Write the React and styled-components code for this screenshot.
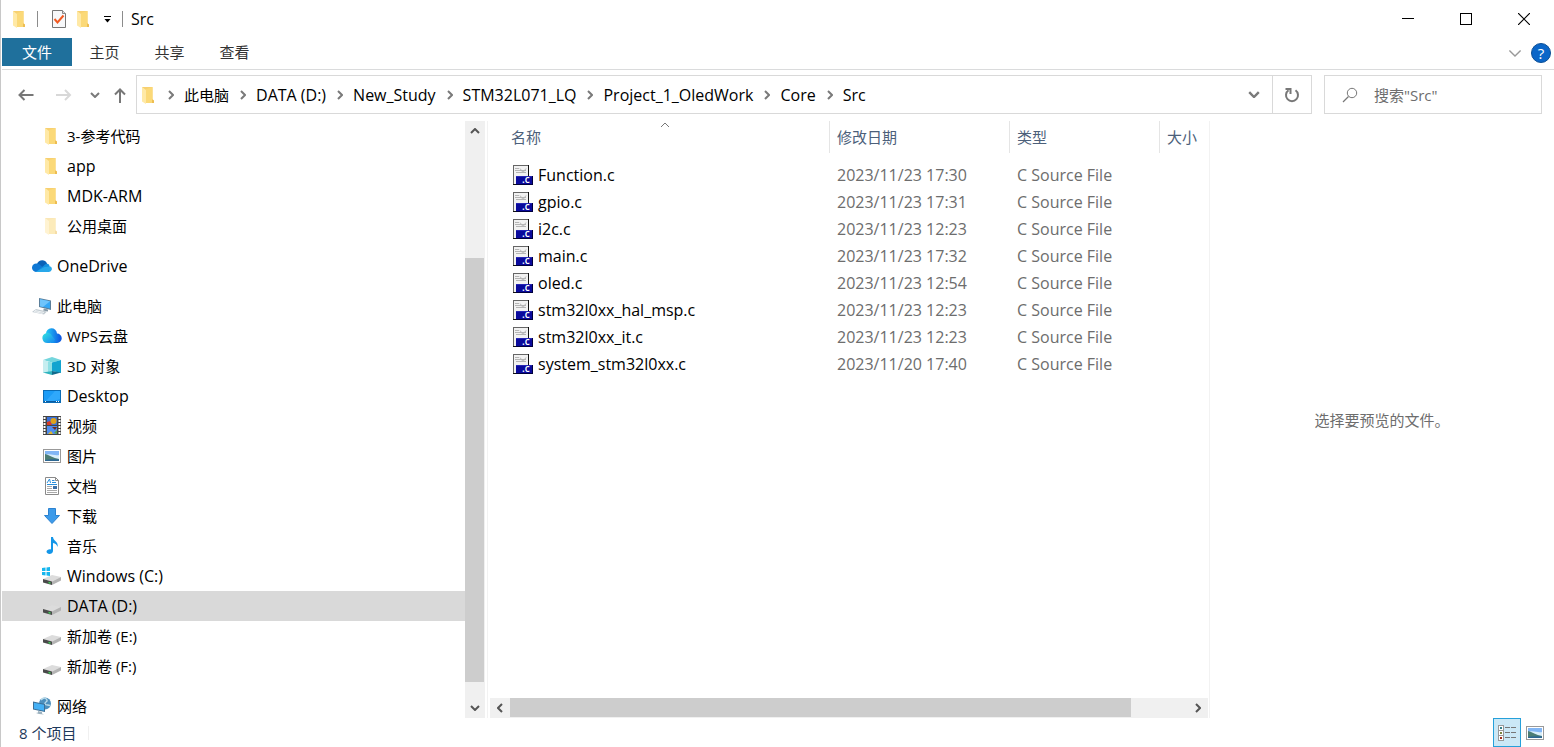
import React, { useState } from "react";
import styled, { createGlobalStyle } from "styled-components";

const GlobalStyle = createGlobalStyle`
  * {
    box-sizing: border-box;
  }

  body {
    margin: 0;
    background: #fff;
    color: #000;
    font-family: "Open Sans", "Noto Sans CJK SC", sans-serif;
    font-size: 15px;
    line-height: 20px;
  }

  button, input {
    font: inherit;
    color: inherit;
  }

  svg {
    display: block;
    flex: none;
  }
`;

const Window = styled.div`
  display: flex;
  flex-direction: column;
  height: 100vh;
  padding-left: 1px;
  border-left: 1px solid #c8c8c8;
  background: #fff;
  overflow: hidden;
`;

const PlainButton = styled.button`
  display: flex;
  align-items: center;
  justify-content: center;
  padding: 0;
  border: 0;
  background: none;
`;

const Latin = styled.span`
  font-size: 16px;
`;

/* title bar */

const TitleBar = styled.header`
  display: flex;
  align-items: center;
  height: 38px;
  padding: 0 1px 0 8px;
`;

const QuickAccess = styled.div`
  display: flex;
  align-items: center;
  gap: 7px;
`;

const Separator = styled.span`
  width: 1px;
  height: 16px;
  margin-right: 6px;
  background: #8c8c8c;
`;

const CustomizeButton = styled(PlainButton)`
  width: 14px;
  height: 20px;
`;

const Title = styled.h1`
  flex: 1;
  margin: 0 0 0 2px;
  font-size: 16px;
  font-weight: 400;
`;

const CaptionButton = styled(PlainButton)`
  width: 58px;
  height: 38px;
`;

/* ribbon */

const Ribbon = styled.nav`
  display: flex;
  align-items: flex-start;
  height: 32px;
  border-bottom: 1px solid #dadbdc;
`;

const RibbonTab = styled(PlainButton)`
  width: ${(p) => (p.$primary ? 70 : 65)}px;
  height: 28px;
  background: ${(p) => (p.$primary ? "#1f709c" : "none")};
  color: ${(p) => (p.$primary ? "#fff" : "#333")};
`;

const RibbonTools = styled.div`
  display: flex;
  align-items: center;
  gap: 9px;
  height: 30px;
  margin-left: auto;
  padding-right: 3px;
`;

/* navigation row */

const NavRow = styled.div`
  display: flex;
  align-items: center;
  height: 51px;
  padding: 0 12px 2px 0;
`;

const NavButtons = styled.div`
  display: flex;
  align-items: center;
  width: 134px;
  padding-left: 8px;
`;

const NavButton = styled(PlainButton)`
  width: ${(p) => p.$width}px;
  height: 38px;
`;

const AddressBar = styled.div`
  display: flex;
  align-items: center;
  flex: 1;
  height: 39px;
  padding-left: 2px;
  border: 1px solid #d9d9d9;
`;

const Crumbs = styled.ol`
  display: flex;
  flex: 1;
  margin: 0;
  padding: 0;
  list-style: none;
`;

const Crumb = styled.li`
  display: flex;
  align-items: center;
  gap: 10px;
  padding-left: 11px;
  white-space: nowrap;

  &:first-child {
    padding-left: 9px;
  }

  a {
    color: #000;
    text-decoration: none;
  }
`;

const AddressButton = styled(PlainButton)`
  width: ${(p) => (p.$divided ? 39 : 36)}px;
  height: 37px;
  border-left: ${(p) => (p.$divided ? "1px solid #d9d9d9" : "0")};
`;

const SearchBox = styled.label`
  display: flex;
  align-items: center;
  gap: 16px;
  width: 218px;
  height: 39px;
  margin-left: 12px;
  padding-left: 17px;
  border: 1px solid #d9d9d9;

  input {
    flex: 1;
    min-width: 0;
    padding: 0;
    border: 0;
    outline: 0;
    background: none;
  }

  input::placeholder {
    color: #6d6d6d;
    opacity: 1;
  }
`;

/* body */

const Body = styled.div`
  display: flex;
  flex: 1;
  min-height: 0;
`;

const Sidebar = styled.aside`
  display: flex;
  width: 483px;
`;

const Tree = styled.div`
  flex: 1;
  min-width: 0;
  overflow: hidden;
`;

const TreeGroup = styled.ul`
  margin: 0 0 10px;
  padding: 0;
  list-style: none;
`;

const TreeItem = styled.a`
  display: flex;
  align-items: center;
  gap: 5px;
  height: 30px;
  padding-left: ${(p) => (p.$level ? 40 : 30)}px;
  background: ${(p) => (p.$selected ? "#d9d9d9" : "transparent")};
  color: #000;
  text-decoration: none;
  white-space: nowrap;
`;

const ScrollBar = styled.div`
  display: flex;
  flex-direction: ${(p) => (p.$vertical ? "column" : "row")};
  ${(p) => (p.$vertical ? "width" : "height")}: 20px;
  padding: ${(p) => (p.$vertical ? "0 1px 0 0" : "0 0 1px")};
  background: #f0f0f0;
`;

const ScrollButton = styled(PlainButton)`
  width: 20px;
  height: 20px;
`;

const ScrollSpace = styled.div`
  flex: ${(p) => p.$grow} 1 0;
  background: ${(p) => (p.$thumb ? "#cdcdcd" : "none")};
`;

const FilePane = styled.main`
  display: flex;
  flex-direction: column;
  flex: 1;
  min-width: 0;
  margin-left: 2px;
  padding: 0 1px 0 2px;
  border-left: 1px solid #f2f2f2;
  border-right: 1px solid #f2f2f2;
`;

const FileArea = styled.div`
  flex: 1;
  min-height: 0;
  overflow: hidden;
`;

const FileTable = styled.table`
  width: 100%;
  border-collapse: separate;
  border-spacing: 0;
  table-layout: fixed;

  th {
    position: relative;
    height: 32px;
    padding: 0 0 0 7px;
    border-right: 1px solid #e5e5e5;
    color: #4c607a;
    font-weight: 400;
    text-align: left;
  }

  th:last-child {
    border-right: 0;
  }

  th:first-child {
    padding-left: 21px;
  }

  td {
    height: 27px;
    padding: 0 0 0 7px;
    color: #6d6d6d;
    font-size: 16px;
    white-space: nowrap;
  }

  td:first-child {
    padding-left: 23px;
    color: #000;
  }

  tbody::before {
    content: "";
    display: block;
    height: 8px;
  }
`;

const SortMark = styled.span`
  position: absolute;
  top: 1px;
  left: 50%;
`;

const FileName = styled.div`
  display: flex;
  align-items: center;
  gap: 5px;
`;

const Preview = styled.section`
  display: flex;
  align-items: center;
  justify-content: center;
  width: 344px;
  color: #6d6d6d;
`;

const StatusBar = styled.footer`
  display: flex;
  align-items: center;
  height: 29px;
  padding-right: 10px;
  color: #1e395b;
`;

const StatusText = styled.span`
  padding: 0 12px 0 17px;
  border-right: 1px solid #f0f0f0;
  line-height: 14px;
`;

const ViewButtons = styled.div`
  display: flex;
  gap: 5px;
  margin-left: auto;
`;

const ViewButton = styled(PlainButton)`
  width: ${(p) => (p.$active ? 28 : 18)}px;
  height: 29px;
  border: ${(p) => (p.$active ? "1px solid #26a0da" : "0")};
  background: ${(p) => (p.$active ? "#cbe8f6" : "none")};
`;

/* icons */

const FolderIcon = ({ faded }) => (
  <svg width="20" height="20" viewBox="0 0 20 20" opacity={faded ? 0.5 : 1}>
    <path d="M3 2h10.500v12l1.500 2v2H7z" fill="#f7d070" />
    <path d="M7 4l6.500-2v12l1.500 2v2H7z" fill="#fbd978" />
    <path d="M13 14.500l2 1V18h-2z" fill="#edbd52" />
    <path d="M3 2l4 3v14l-4-2.500z" fill="#ffe9a6" />
  </svg>
);

const CheckPageIcon = () => (
  <svg width="16" height="20" viewBox="0 0 16 20">
    <path d="M1.500 1.500h10l3 3v14h-13z" fill="#f7f8fa" stroke="#777" />
    <path d="M11.500 1.500v3h3" fill="#ddd" stroke="#888" />
    <path d="M3.500 10l3 3.500 6-7" fill="none" stroke="#f15a22" strokeWidth="2" />
  </svg>
);

const paths = {
  right: "M1 1l4 4-4 4",
  left: "M5 1L1 5l4 4",
  down: "M1 1l4 4 4-4",
  up: "M1 5l4-4 4 4",
};

const Chevron = ({ to, size = 10, color = "#7a7a7a", weight = 2 }) => {
  const flat = to === "up" || to === "down";
  return (
    <svg
      width={flat ? size : size * 0.6}
      height={flat ? size * 0.6 : size}
      viewBox={flat ? "0 0 10 6" : "0 0 6 10"}
    >
      <path d={paths[to]} fill="none" stroke={color} strokeWidth={weight} />
    </svg>
  );
};

const ArrowIcon = ({ to, color = "#777" }) => (
  <svg width="16" height="16" viewBox="0 0 16 16">
    <path
      d={
        {
          left: "M15.500 8H2M6.500 3l-5 5 5 5",
          right: "M0 8h14M9 3l5 5-5 5",
          up: "M8 16V2.500M3 7.500l5-5 5 5",
        }[to]
      }
      fill="none"
      stroke={color}
      strokeWidth="2"
    />
  </svg>
);

const RefreshIcon = () => (
  <svg width="16" height="16" viewBox="0 0 16 16">
    <path d="M4.500 3.300A6 6 0 1 0 11.500 3.300" fill="none" stroke="#777" strokeWidth="2" />
    <path d="M1.500 2h5v5" fill="none" stroke="#777" strokeWidth="2" />
  </svg>
);

const SearchIcon = () => (
  <svg width="16" height="16" viewBox="0 0 16 16">
    <circle cx="10" cy="6" r="4.700" fill="none" stroke="#777" />
    <path d="M6.500 9.500L1 15" stroke="#777" strokeWidth="1.200" />
  </svg>
);

const HelpIcon = () => (
  <svg width="20" height="20" viewBox="0 0 20 20">
    <circle cx="10" cy="10" r="9.500" fill="#0b66c8" stroke="#0c4f96" />
    <text x="10" y="15.500" fill="#fff" fontSize="15" textAnchor="middle">?</text>
  </svg>
);

const OneDriveIcon = () => (
  <svg width="20" height="20" viewBox="0 0 20 20">
    <path d="M5 8c1-4 8-5.500 10-.500l1 4-9 3z" fill="#0a62b8" />
    <path d="M4 16a4.200 4.200 0 0 1 .500-8.500c3 0 5 3 8 5L7 16z" fill="#0f78d4" />
    <path d="M4 16L12 9.500c1-1.500 3-2.500 5-1l1 3-6 4.500z" fill="#1490df" />
    <path d="M3.500 16l9-5 6-.500A3 3 0 0 1 17 16z" fill="#28a8ea" />
  </svg>
);

const ComputerIcon = () => (
  <svg width="20" height="20" viewBox="0 0 20 20">
    <path d="M7 2l12 2.500V14L7 11z" fill="#5b7f9b" />
    <path d="M8 3.300l10 2v7.300L8 10.200z" fill="#35a7f5" />
    <path d="M8 3.300l10 2-7 5.600-3-.700z" fill="#6fc4fb" />
    <path d="M12 12.500l4 1v2l-5-1z" fill="#8799a5" />
    <path d="M4 13l11 2.500-3 3L0 16z" fill="#c3ccd2" />
    <path d="M3 14.500l9 2M2 15.500l8.500 2" stroke="#eef2f4" />
  </svg>
);

const WpsCloudIcon = () => (
  <svg width="20" height="20" viewBox="0 0 20 20">
    <defs>
      <linearGradient id="wpsBack">
        <stop offset="0" stopColor="#23c9f5" />
        <stop offset="1" stopColor="#0b50e0" />
      </linearGradient>
      <linearGradient id="wpsFront" x2="1" y2="1">
        <stop offset="0" stopColor="#32e3e0" />
        <stop offset="1" stopColor="#1583f2" />
      </linearGradient>
    </defs>
    <path d="M4 8a5.500 5.500 0 0 1 11-.500A4.600 4.600 0 0 1 15 17H9z" fill="url(#wpsBack)" />
    <path d="M5.500 17a5 5 0 1 1 4.500-7l3 3.500c-1 2-3 3.500-5.500 3.500z" fill="url(#wpsFront)" />
  </svg>
);

const CubeIcon = () => (
  <svg width="20" height="20" viewBox="0 0 20 20">
    <path d="M1 4l9-3 9 3-9 2.500z" fill="#74d6dd" />
    <path d="M1 4l9 2.500V15l-9 2z" fill="#c6eef0" />
    <path d="M6 5.400l4 1.100V15l-4 1z" fill="#8fe0e4" />
    <path d="M19 4l-9 2.500V15l9 2z" fill="#12a4cf" />
    <path d="M10 15l-9 1.500 9 2.500z" fill="#2fb4be" />
    <path d="M10 15l9 1.500-9 2.500z" fill="#116b8c" />
  </svg>
);

const DesktopIcon = () => (
  <svg width="20" height="20" viewBox="0 0 20 20">
    <rect x="1.500" y="4.500" width="17" height="12" fill="#1c9cf6" stroke="#0b6cb5" />
    <path d="M13 5h5v8l-10 3H3z" fill="#3cb0ff" opacity="0.600" />
    <path d="M2 15.500h16" stroke="#0a5ba0" />
    <path d="M3 15.500h1M14 15.500h1M16 15.500h1" stroke="#fff" />
  </svg>
);

const VideoIcon = () => (
  <svg width="20" height="20" viewBox="0 0 20 20">
    <rect x="1" y="0" width="18" height="19" fill="#444" />
    <path d="M2.500 1v18M17.500 1v18" stroke="#fff" strokeWidth="2" strokeDasharray="2 1" />
    <rect x="5" y="1" width="10" height="8" fill="#3971d8" />
    <rect x="5" y="10" width="10" height="8" fill="#4f8ef0" />
    <circle cx="11.500" cy="5" r="3" fill="#e0a21b" />
    <path d="M5 6l3-1 2 4H5z" fill="#d93a25" />
    <path d="M10 11h5l-2 3z" fill="#702b20" />
    <path d="M6 18l3-3 2 3z" fill="#e4b52c" />
    <path d="M12 17l3-3v4z" fill="#5aa343" />
  </svg>
);

const PictureIcon = ({ width = 20 }) => (
  <svg width={width} height={width} viewBox={width === 20 ? "0 0 20 20" : "1 1 18 18"}>
    <rect x="1.500" y="3.500" width="17" height="13" fill="#fff" stroke="#999" />
    <rect x="3" y="5" width="14" height="10" fill="#82b6f5" />
    <path d="M3 9c5-2 9 1 14 0v4H3z" fill="#d9eefa" />
    <path d="M3 8c4 1 8 4 14 5v2H3z" fill="#4c7d74" />
    <path d="M3 14c4-1 9-1 14-.500V15H3z" fill="#2d6792" />
  </svg>
);

const DocumentIcon = () => (
  <svg width="20" height="20" viewBox="0 0 20 20">
    <path d="M3.500 1.500h10l3 3v14h-13z" fill="#fff" stroke="#8a8a8a" />
    <path d="M13.500 1.500v3h3" fill="none" stroke="#8a8a8a" />
    <path d="M5 7l2.500-4 1 4M10 4.500h2.500M10 6.500h4M5 8.500h10" fill="none" stroke="#2a8edb" />
    <path d="M5 10.500h5M5 12.500h5M5 14.500h10M5 16.500h10" stroke="#aaa" />
    <rect x="11" y="10" width="4" height="3" fill="#3c6ea5" />
  </svg>
);

const DownloadIcon = () => (
  <svg width="20" height="20" viewBox="0 0 20 20">
    <path d="M6.500 2.500h7v7h4L10 17.500 2.500 9.500h4z" fill="#3d9bea" stroke="#2b82d0" />
  </svg>
);

const MusicIcon = () => (
  <svg width="20" height="20" viewBox="0 0 20 20">
    <path d="M9 1h2c0 4 6 4.500 4.500 10-.600-2.500-2-3.500-4.500-4v8c0 2-2 3-3.500 3S4.500 17 4.500 15.800C4.500 14 7 13 9 13.500z" fill="#1496e8" />
  </svg>
);

const DriveIcon = ({ system }) => (
  <svg width="20" height="20" viewBox="0 0 20 20">
    <path d="M1 13l9-4 9 2-9 4.500z" fill="#dcdcdc" />
    <path d="M1 13l9 2.500v3.500l-9-2.500z" fill="#4a4a4a" />
    <path d="M10 15.500l9-4.500v3.500L10 19z" fill="#b4b4b4" />
    <path d="M6.500 16.500l2 .600" stroke="#43d35a" strokeWidth="1.500" />
    {system && (
      <path
        d="M0 2l3.500-.500V5H0zM4.500 1.400L8 1v4H4.500zM0 6h3.500v3.500L0 9zM4.500 6H8v4l-3.500-.400z"
        fill="#16b6ee"
      />
    )}
  </svg>
);

const NetworkIcon = () => (
  <svg width="20" height="20" viewBox="0 0 20 20">
    <circle cx="13" cy="7.500" r="6" fill="#4d8fbd" />
    <path d="M9 4c3-3 5-2 6 0s-3 2-2 4 4 0 5 2" fill="none" stroke="#b8d9e8" strokeWidth="1.500" />
    <path d="M1 5.500l12 2.500v8L1 13.500z" fill="#3d6f96" />
    <path d="M2 6.700l10 2.100v6L2 12.700z" fill="#44b0f5" />
    <path d="M6 15l4 1v1.500l2 1-5-.500-3-1 2-.500z" fill="#9cb2bf" />
  </svg>
);

const CFileIcon = () => (
  <svg width="20" height="20" viewBox="0 0 20 20">
    <rect x="0.500" y="0.500" width="15" height="19" fill="#f2f2f2" stroke="#666" />
    <path d="M15.500 0v12M0 19.500h4" stroke="#111" />
    <path d="M2 3.500h4M2 5.500h11M3 7.500h10M7 3.500l3 4 3-4" fill="none" stroke="#b5b5b5" />
    <rect x="3" y="11" width="17" height="9" fill="#0a0a9c" />
    <path d="M3 11.500h16" stroke="#2626b5" />
    <path d="M3 19.500h17M19.500 11v9" stroke="#00003c" />
    <text x="9" y="18" fill="#fff" fontSize="10" fontWeight="600">.c</text>
  </svg>
);

const DetailsIcon = () => (
  <svg width="20" height="18" viewBox="0 0 20 18">
    {[1, 6, 11].map((y, i) => (
      <g key={y}>
        <rect x="1.500" y={y + 0.5} width="5" height="5" fill="#fff" stroke="#999" />
        <rect x="3" y={y + 2} width="2" height="2" fill={["#35818c", "#7b8440", "#a22d1a"][i]} />
        <path d={`M8 ${y + 2.5}h5M14 ${y + 2.5}h5`} stroke="#777" />
      </g>
    ))}
  </svg>
);

/* data */

const crumbs = ["此电脑", "DATA (D:)", "New_Study", "STM32L071_LQ", "Project_1_OledWork", "Core", "Src"];

const tree = [
  [
    { name: "3-参考代码", icon: <FolderIcon />, level: 1 },
    { name: "app", icon: <FolderIcon />, level: 1 },
    { name: "MDK-ARM", icon: <FolderIcon />, level: 1 },
    { name: "公用桌面", icon: <FolderIcon faded />, level: 1 },
  ],
  [{ name: "OneDrive", icon: <OneDriveIcon /> }],
  [
    { name: "此电脑", icon: <ComputerIcon /> },
    { name: "WPS云盘", icon: <WpsCloudIcon />, level: 1 },
    { name: "3D 对象", icon: <CubeIcon />, level: 1 },
    { name: "Desktop", icon: <DesktopIcon />, level: 1 },
    { name: "视频", icon: <VideoIcon />, level: 1 },
    { name: "图片", icon: <PictureIcon />, level: 1 },
    { name: "文档", icon: <DocumentIcon />, level: 1 },
    { name: "下载", icon: <DownloadIcon />, level: 1 },
    { name: "音乐", icon: <MusicIcon />, level: 1 },
    { name: "Windows (C:)", icon: <DriveIcon system />, level: 1 },
    { name: "DATA (D:)", icon: <DriveIcon />, level: 1 },
    { name: "新加卷 (E:)", icon: <DriveIcon />, level: 1 },
    { name: "新加卷 (F:)", icon: <DriveIcon />, level: 1 },
  ],
  [{ name: "网络", icon: <NetworkIcon /> }],
];

const files = [
  ["Function.c", "2023/11/23 17:30"],
  ["gpio.c", "2023/11/23 17:31"],
  ["i2c.c", "2023/11/23 12:23"],
  ["main.c", "2023/11/23 17:32"],
  ["oled.c", "2023/11/23 12:54"],
  ["stm32l0xx_hal_msp.c", "2023/11/23 12:23"],
  ["stm32l0xx_it.c", "2023/11/23 12:23"],
  ["system_stm32l0xx.c", "2023/11/20 17:40"],
];

// Latin glyphs are drawn slightly larger so they sit level with the Chinese ones
const Label = ({ children }) =>
  /^[\x20-\x7e]+$/.test(children) ? <Latin>{children}</Latin> : <span>{children}</span>;

export default function App() {
  const [selected, setSelected] = useState("DATA (D:)");
  const [query, setQuery] = useState("");

  const select = (e, name) => {
    e.preventDefault();
    setSelected(name);
  };

  return (
    <>
      <GlobalStyle />
      <Window>
        <TitleBar>
          <QuickAccess>
            <FolderIcon />
            <Separator />
            <PlainButton aria-label="属性">
              <CheckPageIcon />
            </PlainButton>
            <PlainButton aria-label="新建文件夹">
              <FolderIcon />
            </PlainButton>
            <CustomizeButton aria-label="自定义快速访问工具栏">
              <svg width="8" height="8" viewBox="0 0 8 8">
                <path d="M0 1.500h7" stroke="#000" />
                <path d="M0.500 4h6L3.500 7.500z" fill="#000" />
              </svg>
            </CustomizeButton>
            <Separator />
          </QuickAccess>
          <Title>Src</Title>
          <CaptionButton aria-label="最小化">
            <svg width="12" height="12" viewBox="0 0 12 12">
              <path d="M0 5.500h12" stroke="#000" />
            </svg>
          </CaptionButton>
          <CaptionButton aria-label="最大化">
            <svg width="12" height="12" viewBox="0 0 12 12">
              <rect x="0.500" y="0.500" width="11" height="11" fill="none" stroke="#000" />
            </svg>
          </CaptionButton>
          <CaptionButton aria-label="关闭">
            <svg width="12" height="12" viewBox="0 0 12 12">
              <path d="M0 0l12 12M12 0L0 12" stroke="#000" strokeWidth="1.200" />
            </svg>
          </CaptionButton>
        </TitleBar>

        <Ribbon>
          <RibbonTab $primary>文件</RibbonTab>
          <RibbonTab>主页</RibbonTab>
          <RibbonTab>共享</RibbonTab>
          <RibbonTab>查看</RibbonTab>
          <RibbonTools>
            <PlainButton aria-label="展开功能区">
              <Chevron to="down" size={14} color="#999" weight={1} />
            </PlainButton>
            <PlainButton aria-label="帮助">
              <HelpIcon />
            </PlainButton>
          </RibbonTools>
        </Ribbon>

        <NavRow>
          <NavButtons>
            <NavButton $width={32} aria-label="后退">
              <ArrowIcon to="left" />
            </NavButton>
            <NavButton $width={44} aria-label="前进">
              <ArrowIcon to="right" color="#d8d8d8" />
            </NavButton>
            <NavButton $width={17} aria-label="最近浏览的位置">
              <Chevron to="down" />
            </NavButton>
            <NavButton $width={33} aria-label="上移">
              <ArrowIcon to="up" />
            </NavButton>
          </NavButtons>
          <AddressBar>
            <FolderIcon />
            <Crumbs>
              {crumbs.map((name) => (
                <Crumb key={name}>
                  <Chevron to="right" />
                  <a href="#path">
                    <Label>{name}</Label>
                  </a>
                </Crumb>
              ))}
            </Crumbs>
            <AddressButton aria-label="以前的位置">
              <Chevron to="down" size={12} />
            </AddressButton>
            <AddressButton $divided aria-label="刷新">
              <RefreshIcon />
            </AddressButton>
          </AddressBar>
          <SearchBox>
            <SearchIcon />
            <input
              type="text"
              aria-label="搜索"
              placeholder={'搜索"Src"'}
              value={query}
              onChange={(e) => setQuery(e.target.value)}
            />
          </SearchBox>
        </NavRow>

        <Body>
          <Sidebar>
            <Tree>
              {tree.map((group) => (
                <TreeGroup key={group[0].name}>
                  {group.map((item) => (
                    <li key={item.name}>
                      <TreeItem
                        href="#tree"
                        $level={item.level}
                        $selected={item.name === selected}
                        onClick={(e) => select(e, item.name)}
                      >
                        {item.icon}
                        <Label>{item.name}</Label>
                      </TreeItem>
                    </li>
                  ))}
                </TreeGroup>
              ))}
            </Tree>
            <ScrollBar $vertical>
              <ScrollButton aria-label="向上滚动">
                <Chevron to="up" color="#555" />
              </ScrollButton>
              <ScrollSpace $grow={117} />
              <ScrollSpace $grow={424} $thumb />
              <ScrollSpace $grow={16} />
              <ScrollButton aria-label="向下滚动">
                <Chevron to="down" color="#555" />
              </ScrollButton>
            </ScrollBar>
          </Sidebar>

          <FilePane>
            <FileArea>
              <FileTable>
                <colgroup>
                  <col />
                  <col width="180" />
                  <col width="150" />
                  <col width="48" />
                </colgroup>
                <thead>
                  <tr>
                    <th>
                      名称
                      <SortMark>
                        <Chevron to="up" color="#777" weight={1} />
                      </SortMark>
                    </th>
                    <th>修改日期</th>
                    <th>类型</th>
                    <th>大小</th>
                  </tr>
                </thead>
                <tbody>
                  {files.map(([name, date]) => (
                    <tr key={name}>
                      <td>
                        <FileName>
                          <CFileIcon />
                          {name}
                        </FileName>
                      </td>
                      <td>{date}</td>
                      <td>C Source File</td>
                      <td></td>
                    </tr>
                  ))}
                </tbody>
              </FileTable>
            </FileArea>
            <ScrollBar>
              <ScrollButton aria-label="向左滚动">
                <Chevron to="left" color="#555" />
              </ScrollButton>
              <ScrollSpace $grow={620} $thumb />
              <ScrollSpace $grow={57} />
              <ScrollButton aria-label="向右滚动">
                <Chevron to="right" color="#555" />
              </ScrollButton>
            </ScrollBar>
          </FilePane>

          <Preview>选择要预览的文件。</Preview>
        </Body>

        <StatusBar>
          <StatusText>8 个项目</StatusText>
          <ViewButtons>
            <ViewButton $active aria-label="详细信息">
              <DetailsIcon />
            </ViewButton>
            <ViewButton aria-label="大缩略图">
              <PictureIcon width={18} />
            </ViewButton>
          </ViewButtons>
        </StatusBar>
      </Window>
    </>
  );
}
